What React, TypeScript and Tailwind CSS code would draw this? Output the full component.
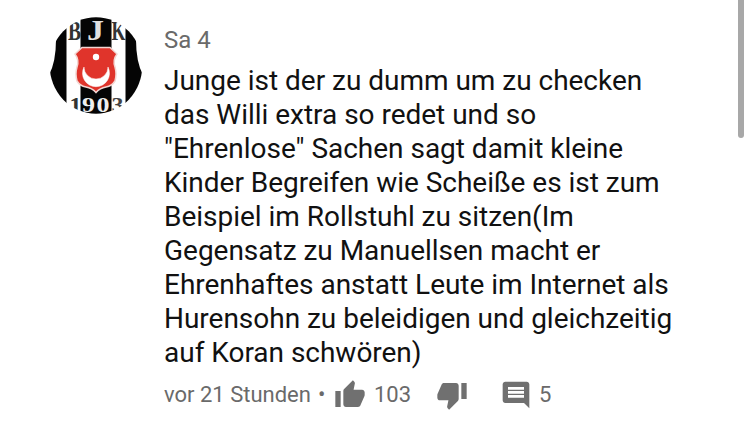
import React from "react";

const lines = [
  "Junge ist der zu dumm um zu checken",
  "das Willi extra so redet und so",
  '"Ehrenlose" Sachen sagt damit kleine',
  "Kinder Begreifen wie Scheiße es ist zum",
  "Beispiel im Rollstuhl zu sitzen(Im",
  "Gegensatz zu Manuellsen macht er",
  "Ehrenhaftes anstatt Leute im Internet als",
  "Hurensohn zu beleidigen und gleichzeitig",
  "auf Koran schwören)",
];

function Avatar() {
  return (
    <svg viewBox="0 0 94 97" className="h-[97px] w-[94px]">
      <defs>
        <clipPath id="round">
          <ellipse cx="47" cy="48.5" rx="46.3" ry="48.3" />
        </clipPath>
      </defs>
      <g clipPath="url(#round)">
        <rect width="94" height="97" fill="#fff" />
        <path d="M0 0H17.500V97H0V58Q7 45 7 22L0 10Z" fill="#050505" />
        <path d="M94 0H76.500V97H94V58Q87 45 87 22L94 10Z" fill="#050505" />
        <rect x="31.500" y="0" width="31" height="97" fill="#050505" />
        <g fontFamily="'Liberation Serif', serif" fontWeight="700">
          <text x="19" y="23" fontSize="28" textLength="13" lengthAdjust="spacingAndGlyphs" fill="#333">B</text>
          <text x="38" y="23" fontSize="29" textLength="17" lengthAdjust="spacingAndGlyphs" fill="#e0e0e0">J</text>
          <text x="62.500" y="23" fontSize="28" textLength="14" lengthAdjust="spacingAndGlyphs" fill="#333">K</text>
          <text x="20.500" y="95" fontSize="22" textLength="12" lengthAdjust="spacingAndGlyphs" fill="#333">1</text>
          <text x="33" y="95" fontSize="22" textLength="13" lengthAdjust="spacingAndGlyphs" fill="#eee">9</text>
          <text x="47.500" y="95" fontSize="22" textLength="13" lengthAdjust="spacingAndGlyphs" fill="#eee">0</text>
          <text x="62.500" y="95" fontSize="22" textLength="12" lengthAdjust="spacingAndGlyphs" fill="#444">3</text>
        </g>
        <path d="M33 30.500H61L68 37Q63.500 43 66 50Q68 57 66 64Q63 69 57 70Q51 71 47 75.500Q43 71 37 70Q31 69 28 64Q26 57 28 50Q30.500 43 26 37Z" fill="#e0342b" stroke="#f3d6d2" strokeWidth="1.500" />
        <path d="M35 50A13.500 13.500 0 1 0 59 50A12 12 0 0 1 35 50Z" fill="#fff" stroke="#fff" strokeWidth="0.500" />
        <circle cx="47" cy="40" r="3.200" fill="#fff" />
      </g>
    </svg>
  );
}

export default function App() {
  return (
    <main className="flex h-[430px] w-[750px] items-start overflow-hidden bg-white pl-[49px] font-[Roboto,sans-serif]">
      <div className="w-[94px] shrink-0 pt-[17px]"><Avatar /></div>
      <section className="ml-[21px] w-[574px] shrink-0 pt-[26px]">
        <h1 className="h-[38px] text-[24px] leading-[28px] text-[#6a6a6a]">Sa 4</h1>
        <div className="text-[28px] leading-[34px] tracking-[-0.02px] text-[#111]">
          {lines.map((line) => (
            <p key={line} className="whitespace-nowrap">{line}</p>
          ))}
        </div>
        <footer className="mt-[7px] flex h-[34px] items-center text-[22px] text-[#6a6a6a]">
          <span className="w-[147px] whitespace-nowrap">vor 21 Stunden</span>
          <span className="ml-[7px] w-[10px]">•</span>
          <svg viewBox="0 0 24 24" className="ml-[6px] mt-[2px] size-8" fill="#707070">
            <path d="M1 21h4V9H1v12zm22-11c0-1.100-.9-2-2-2h-6.310l.95-4.570.03-.32c0-.41-.17-.79-.44-1.060L14.170 1 7.590 7.590C7.220 7.950 7 8.450 7 9v10c0 1.100.9 2 2 2h9c.83 0 1.540-.5 1.840-1.220l3.020-7.050c.09-.23.14-.47.14-.73v-2z" />
          </svg>
          <span className="ml-[8px] w-[37px]">103</span>
          <svg viewBox="0 0 24 24" className="ml-[25px] mt-[1px] size-8" fill="#707070">
            <path d="M15 3H6c-.83 0-1.540.5-1.840 1.220l-3.020 7.050c-.09.23-.14.47-.14.73v2c0 1.100.9 2 2 2h6.310l-.95 4.570-.03.32c0 .41.17.79.44 1.060L9.830 23l6.590-6.590c.36-.36.58-.86.58-1.410V5c0-1.100-.9-2-2-2zm4 0v12h4V3h-4z" />
          </svg>
          <svg viewBox="0 0 24 24" className="ml-[32px] mt-[2px] size-8" fill="#707070">
            <path d="M21.990 4c0-1.100-.89-2-1.990-2H4c-1.100 0-2 .9-2 2v12c0 1.100.9 2 2 2h14l4 4-.01-18zM18 14H6v-2h12v2zm0-3H6V9h12v2zm0-3H6V6h12v2z" />
          </svg>
          <span className="ml-[7px]">5</span>
        </footer>
      </section>
      <div className="ml-auto mr-[6px] h-[138px] w-[6px] rounded-b-full bg-[#a8a8a8]" />
    </main>
  );
}
